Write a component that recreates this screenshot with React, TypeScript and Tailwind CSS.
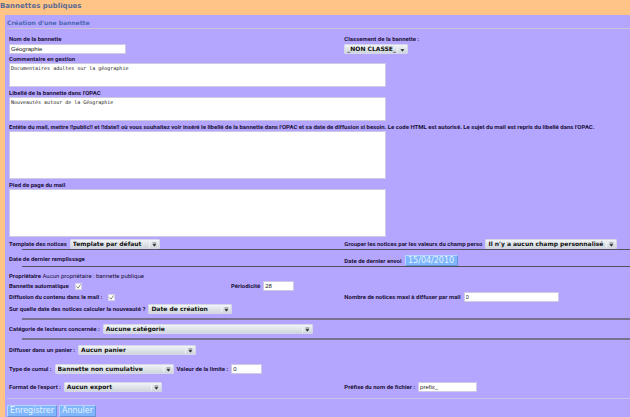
import React from 'react';
import { clsx } from 'clsx';

const labelText = "font-[Roboto,sans-serif] text-[6px] leading-[8px] font-bold text-[#1b1238] whitespace-nowrap";

function Label({ htmlFor, children, className }: { htmlFor?: string; children: React.ReactNode; className?: string }) {
  return (
    <label htmlFor={htmlFor} className={clsx(labelText, className)}>
      {children}
    </label>
  );
}

function TextBox({ id, value, className }: { id: string; value: string; className: string }) {
  return (
    <input
      id={id}
      type="text"
      defaultValue={value}
      className={clsx(
        "block h-[10px] shrink-0 border border-[#cfcae4] bg-white px-px font-['Liberation_Sans',sans-serif] text-[6px] leading-[8px] text-[#222] outline-none",
        className,
      )}
    />
  );
}

function Area({ id, value, className }: { id: string; value?: string; className: string }) {
  return (
    <textarea
      id={id}
      defaultValue={value}
      className={clsx(
        "block w-[377px] max-w-full resize-none border border-[#cfcae4] bg-white px-px font-['DejaVu_Sans_Mono',monospace] text-[5px] leading-[8px] text-[#222] outline-none",
        className,
      )}
    />
  );
}

function Select({ id, value, bar = true, className }: { id: string; value: string; bar?: boolean; className: string }) {
  return (
    <span className={clsx('relative block h-[10px] shrink-0', className)}>
      <select
        id={id}
        className="block h-full w-full appearance-none rounded-[1px] border border-[#d5d6e8] bg-linear-to-b from-[#f1f4f8] to-[#cfd6dc] pl-[2px] font-['DejaVu_Sans',sans-serif] text-[6px] leading-[8px] font-bold text-[#111] outline-none"
      >
        <option>{value}</option>
      </select>
      <svg viewBox="0 0 12 10" className="pointer-events-none absolute top-0 right-0 h-[10px] w-[12px]" aria-hidden="true">
        <path d="M1.5 1.5v7" stroke="#eef2f6" />
        {bar && <path d="M4.6 4h3.6" stroke="#555" strokeWidth="0.8" />}
        <path d="M4.4 5.2h4L6.4 7.6z" fill="#1a1a1a" />
      </svg>
    </span>
  );
}

function Tick({ id }: { id: string }) {
  return (
    <span className="relative block h-[7px] w-[7px] shrink-0">
      <input
        id={id}
        type="checkbox"
        defaultChecked
        className="peer block h-full w-full appearance-none border border-[#d4d4e4] bg-white"
      />
      <svg viewBox="0 0 7 7" className="pointer-events-none absolute inset-0 hidden h-full w-full peer-checked:block" aria-hidden="true">
        <path d="M1.5 3.5L3 5.2L5.6 1.4" fill="none" stroke="#666" strokeWidth="0.8" />
      </svg>
    </span>
  );
}

function Button({ children, className }: { children: React.ReactNode; className?: string }) {
  return (
    <button
      type="button"
      className={clsx(
        "block border border-t-[#b4d6ff] border-l-[#b4d6ff] border-r-[#6a94d8] border-b-[#6a94d8] bg-[#80b6fd] text-center font-['DejaVu_Sans',sans-serif] text-[8px] text-[#e4f3ff]",
        className,
      )}
    >
      {children}
    </button>
  );
}

const row = 'flex items-center';
const left = 'flex w-[54%] items-center gap-[3px]';
const right = 'flex flex-1 items-center gap-[3px]';

export default function App() {
  return (
    <main className="min-h-screen bg-[#ffc486] pl-[5px]">
      <h1 className="-ml-[5px] pb-[3px] font-['DejaVu_Sans',sans-serif] text-[7px] leading-[12px] font-bold text-[#5a6a92]">
        Bannettes publiques
      </h1>
      <form className="min-h-[calc(100vh-15px)] bg-[#b4a5ff] pl-[2px]" onSubmit={(e) => e.preventDefault()}>
        <h2 className="border-b border-[#c9c3dc] pt-[4px] pb-px font-['DejaVu_Sans',sans-serif] text-[6px] leading-[8px] font-bold text-[#4a68b4]">
          Création d'une bannette
        </h2>

        <div className="pt-[6px] pl-[2px]">
          <div className="flex">
            <div className="w-[54%]">
              <Label htmlFor="nom" className="block">Nom de la bannette</Label>
              <TextBox id="nom" value="Géographie" className="mt-px w-[117px]" />
            </div>
            <div className="flex-1">
              <Label htmlFor="classement" className="block">Classement de la bannette :</Label>
              <Select id="classement" value="_NON CLASSE_" bar={false} className="mt-px w-[64px]" />
            </div>
          </div>

          <Label htmlFor="commentaire" className="mt-px block">Commentaire en gestion</Label>
          <Area id="commentaire" value="Documentaires adultes sur la géographie" className="h-[24px]" />

          <Label htmlFor="libelle" className="mt-[2px] block">Libellé de la bannette dans l'OPAC</Label>
          <Area id="libelle" value="Nouveautés autour de la Géographie" className="h-[24px]" />

          <Label htmlFor="entete" className="mt-[2px] block">
            Entête du mail, mettre !!public!! et !!date!! où vous souhaitez voir inséré le libellé de la bannette dans l'OPAC et sa date de diffusion si besoin. Le code HTML est autorisé. Le sujet du mail est repris du libellé dans l'OPAC.
          </Label>
          <Area id="entete" className="h-[48px]" />

          <Label htmlFor="pied" className="mt-[2px] block">Pied de page du mail</Label>
          <Area id="pied" className="h-[48px]" />

          <div className={clsx(row, 'mt-[2px]')}>
            <div className={left}>
              <Label htmlFor="template">Template des notices</Label>
              <Select id="template" value="Template par défaut" className="w-[90px]" />
            </div>
            <div className={right}>
              <Label htmlFor="grouper">Grouper les notices par les valeurs du champ perso</Label>
              <Select id="grouper" value="Il n'y a aucun champ personnalisé" className="w-[132px]" />
            </div>
          </div>
          <hr className="ml-[13px] border-[#555060]" />

          <div className="flex items-start pt-[5px]">
            <span className={clsx(labelText, 'w-[54%]')}>Date de dernier remplissage</span>
            <div className={right}>
              <span className={labelText}>Date de dernier envoi</span>
              <Button className="h-[11px] w-[53px] leading-[9px]">15/04/2010</Button>
            </div>
          </div>
          <hr className="ml-[13px] border-[#555060]" />

          <p className={clsx(labelText, 'mt-[5px]')}>
            Propriétaire <span className="font-normal">Aucun propriétaire : bannette publique</span>
          </p>
          <div className={clsx(row, 'mt-px')}>
            <div className="flex w-[222px] items-center gap-[6px]">
              <Label htmlFor="auto">Bannette automatique</Label>
              <Tick id="auto" />
            </div>
            <div className="flex items-center gap-[3px]">
              <Label htmlFor="periode">Périodicité</Label>
              <TextBox id="periode" value="28" className="w-[31px]" />
            </div>
          </div>
          <div className={clsx(row, 'mt-px')}>
            <div className="flex w-[54%] items-center gap-[6px]">
              <Label htmlFor="contenu">Diffusion du contenu dans le mail :</Label>
              <Tick id="contenu" />
            </div>
            <div className={right}>
              <Label htmlFor="maxi">Nombre de notices maxi à diffuser par mail</Label>
              <TextBox id="maxi" value="0" className="w-[95px]" />
            </div>
          </div>
          <div className={clsx(row, 'mt-[2px] gap-[3px]')}>
            <Label htmlFor="date">Sur quelle date des notices calculer la nouveauté ?</Label>
            <Select id="date" value="Date de création" className="w-[84px]" />
          </div>
          <hr className="mt-[4px] ml-[13px] border-t-2 border-[#78708e]" />

          <div className={clsx(row, 'mt-[4px] gap-[3px]')}>
            <Label htmlFor="categorie">Catégorie de lecteurs concernée :</Label>
            <Select id="categorie" value="Aucune catégorie" className="w-[210px]" />
          </div>
          <hr className="mt-[4px] ml-[13px] border-t-2 border-[#78708e]" />

          <div className={clsx(row, 'mt-[5px] gap-[3px]')}>
            <Label htmlFor="panier">Diffuser dans un panier :</Label>
            <Select id="panier" value="Aucun panier" className="w-[118px]" />
          </div>
          <div className={clsx(row, 'mt-[9px] gap-[3px]')}>
            <Label htmlFor="cumul">Type de cumul :</Label>
            <Select id="cumul" value="Bannette non cumulative" className="w-[119px]" />
            <Label htmlFor="limite">Valeur de la limite :</Label>
            <TextBox id="limite" value="0" className="w-[31px]" />
          </div>
          <div className={clsx(row, 'mt-[8px]')}>
            <div className={left}>
              <Label htmlFor="export">Format de l'export :</Label>
              <Select id="export" value="Aucun export" className="w-[98px]" />
            </div>
            <div className={right}>
              <Label htmlFor="prefixe">Préfixe du nom de fichier :</Label>
              <TextBox id="prefixe" value="prefix_" className="w-[59px]" />
            </div>
          </div>
        </div>

        <div className="mt-[6px] flex gap-[2px] border-t border-[#c9c3ee] pt-[6px]">
          <Button className="h-[12px] w-[50px] leading-[10px]">Enregistrer</Button>
          <Button className="h-[12px] w-[37px] leading-[10px]">Annuler</Button>
        </div>
      </form>
    </main>
  );
}
